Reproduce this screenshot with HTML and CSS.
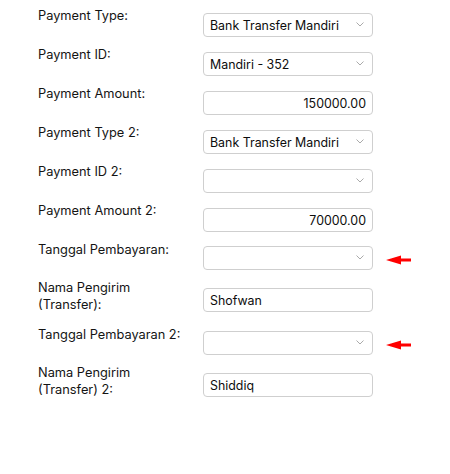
FILE: index.html
```html
<!DOCTYPE html>
<html>
<head>
<meta charset="utf-8">
<link rel="stylesheet" href="styles.css">
</head>
<body>
<form class="form">
  <div class="row">
    <label class="label">Payment Type:</label>
    <div class="field">
      <div class="select-wrap">
        <select class="control"><option>Bank Transfer Mandiri</option></select>
        <svg class="chev" width="8" height="5" viewBox="0 0 8 5"><path d="M0.5 0.5 L4 4 L7.5 0.5" fill="none" stroke="#aaa" stroke-width="1"/></svg>
      </div>
    </div>
  </div>
  <div class="row">
    <label class="label">Payment ID:</label>
    <div class="field">
      <div class="select-wrap">
        <select class="control"><option>Mandiri - 352</option></select>
        <svg class="chev" width="8" height="5" viewBox="0 0 8 5"><path d="M0.5 0.5 L4 4 L7.5 0.5" fill="none" stroke="#aaa" stroke-width="1"/></svg>
      </div>
    </div>
  </div>
  <div class="row">
    <label class="label">Payment Amount:</label>
    <div class="field">
      <input class="control num" type="text" value="150000.00">
    </div>
  </div>
  <div class="row">
    <label class="label">Payment Type 2:</label>
    <div class="field">
      <div class="select-wrap">
        <select class="control"><option>Bank Transfer Mandiri</option></select>
        <svg class="chev" width="8" height="5" viewBox="0 0 8 5"><path d="M0.5 0.5 L4 4 L7.5 0.5" fill="none" stroke="#aaa" stroke-width="1"/></svg>
      </div>
    </div>
  </div>
  <div class="row">
    <label class="label">Payment ID 2:</label>
    <div class="field">
      <div class="select-wrap">
        <select class="control"><option></option></select>
        <svg class="chev" width="8" height="5" viewBox="0 0 8 5"><path d="M0.5 0.5 L4 4 L7.5 0.5" fill="none" stroke="#aaa" stroke-width="1"/></svg>
      </div>
    </div>
  </div>
  <div class="row">
    <label class="label">Payment Amount 2:</label>
    <div class="field">
      <input class="control num" type="text" value="70000.00">
    </div>
  </div>
  <div class="row row-date">
    <label class="label">Tanggal Pembayaran:</label>
    <div class="field">
      <div class="select-wrap">
        <select class="control"><option></option></select>
        <svg class="chev" width="8" height="5" viewBox="0 0 8 5"><path d="M0.5 0.5 L4 4 L7.5 0.5" fill="none" stroke="#aaa" stroke-width="1"/></svg>
      </div>
      <svg class="arrow" width="25" height="10" viewBox="0 0 25 10"><path d="M0 5 L15 0.5 L15 3.5 L25 3.5 L25 6.5 L15 6.5 L15 9.5 Z" fill="#ff0000"/></svg>
    </div>
  </div>
  <div class="row row-tall">
    <label class="label">Nama Pengirim<br>(Transfer):</label>
    <div class="field">
      <input class="control" type="text" value="Shofwan">
    </div>
  </div>
  <div class="row row-date">
    <label class="label">Tanggal Pembayaran 2:</label>
    <div class="field">
      <div class="select-wrap">
        <select class="control"><option></option></select>
        <svg class="chev" width="8" height="5" viewBox="0 0 8 5"><path d="M0.5 0.5 L4 4 L7.5 0.5" fill="none" stroke="#aaa" stroke-width="1"/></svg>
      </div>
      <svg class="arrow" width="25" height="10" viewBox="0 0 25 10"><path d="M0 5 L15 0.5 L15 3.5 L25 3.5 L25 6.5 L15 6.5 L15 9.5 Z" fill="#ff0000"/></svg>
    </div>
  </div>
  <div class="row row-tall">
    <label class="label">Nama Pengirim<br>(Transfer) 2:</label>
    <div class="field">
      <input class="control" type="text" value="Shiddiq">
    </div>
  </div>
</form>
</body>
</html>
```

FILE: styles.css
```css
html, body {
  margin: 0;
  padding: 0;
  background: #ffffff;
}

body {
  font-family: Inter, "Open Sans", Arial, sans-serif;
  font-size: 13px;
  color: #141414;
}

.form {
  padding: 7px 0 0 38px;
}

.row {
  display: flex;
  align-items: flex-start;
  margin-bottom: 9px;
}

.label {
  width: 165px;
  flex: none;
  line-height: 17px;
  font-size: 12.8px;
  color: #141414;
}

.field {
  display: flex;
  align-items: center;
  padding-top: 6px;
}

.row-date .field {
  padding-top: 5px;
}

.row-tall {
  margin-bottom: 13px;
}

.row-tall .field {
  padding-top: 9px;
}

.control {
  box-sizing: border-box;
  width: 170px;
  height: 24px;
  margin: 0;
  padding: 0 6px;
  border: 1px solid #cfcfcf;
  border-radius: 4px;
  background: #ffffff;
  font-family: Inter, "Open Sans", Arial, sans-serif;
  font-size: 12.4px;
  color: #0d0d0d;
  outline: none;
}

.num {
  text-align: right;
}

.select-wrap {
  position: relative;
  width: 170px;
  height: 24px;
}

select.control {
  -webkit-appearance: none;
  appearance: none;
  display: block;
}

.chev {
  position: absolute;
  right: 9px;
  top: 9px;
  pointer-events: none;
}

.arrow {
  margin-left: 13px;
  margin-top: 4px;
}
```
